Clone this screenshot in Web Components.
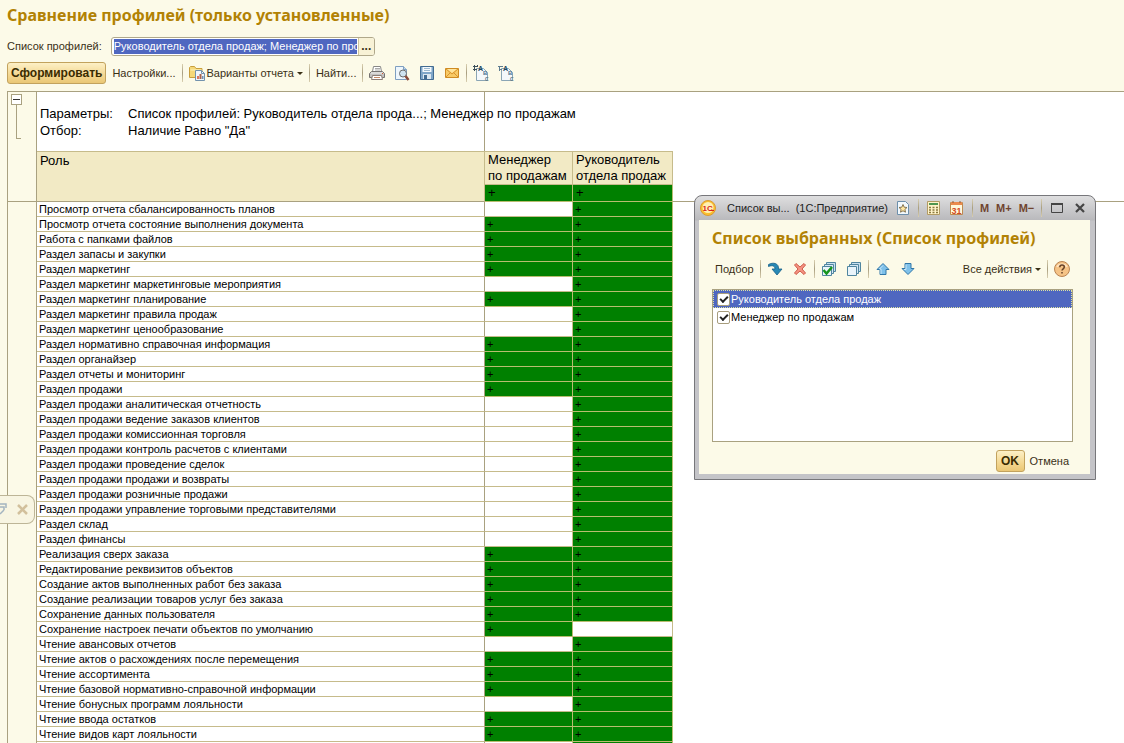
<!DOCTYPE html>
<html lang="ru">
<head>
<meta charset="utf-8">
<title>Сравнение профилей</title>
<style>
html, body { height: 100%; }
body {
  margin: 0; overflow: hidden; color: #3a3016; background: #fcfae8;
  font: 11px/14px "Liberation Sans", Arial, sans-serif;
  --frame: #a9a180; --grid: #c6bb8b; --gold: #b28204; --select: #4f67c0;
}
</style>
</head>
<body>
<profile-report></profile-report>
<script>
const define = (name, html, setup) => {
  const tpl = document.createElement('template');
  tpl.innerHTML = html;
  customElements.define(name, class extends HTMLElement {
    constructor() {
      super();
      this.attachShadow({ mode: 'open' }).append(tpl.content.cloneNode(true));
    }
    connectedCallback() { if (setup) setup(this, this.shadowRoot); }
  });
};

const sheetsBehind = '<path d="M5.500 1.500h9v9h-9z" fill="#c9e0ef" stroke="#50859f"/><path d="M3.500 3.500h9v9h-9z" fill="#d6e8f4" stroke="#50859f"/><path d="M1.500 5.500h9v9h-9z" fill="#eaf4fa" stroke="#50859f"/>';
const letters = '<path d="M3.500 3.500h7l4 4v8h-11z" fill="#f4f8fb" stroke="#8aa5b5"/><g font-family="Liberation Sans" font-weight="700" fill="#1f465f"><text x="5" y="6" font-size="7">A</text><text x="10" y="10" font-size="6" fill="#4e7590">B</text><text x="12" y="16" font-size="5" fill="#5e7584">C</text></g>';
const icons = {
  folder: '<path d="M.500 12.500v-10l1-1h4l1.500 2h6v9z" fill="#f5d878" stroke="#c89e3c"/><path d="M1.500 5h11" stroke="#fff2b8"/><path d="M6.500 5.500h6l3 3v7h-9z" fill="#f0f6fb" stroke="#7292ad"/><path d="M12.500 5.500v3h3" fill="none" stroke="#7292ad"/><path d="M8 11h2v3H8z" fill="#db7660"/><path d="M10.500 9h2v5h-2z" fill="#a8654f"/><path d="M13 11h1.500v3H13z" fill="#6f91b6"/>',
  print: '<path d="M4.500 1.500h7l1 5h-9z" fill="#fff" stroke="#888"/><path d="M6 3.500h5M6 5h5" stroke="#aaa"/><path d="M2.500 6.500h11l2 2v4h-2l-1 1h-9l-1-1h-2v-4z" fill="#c3c1c0" stroke="#757271"/><path d="M2 8h12" stroke="#f2f2f2"/><path d="M3.500 10.500h9l1 4h-11z" fill="#fff" stroke="#8b7d77"/><path d="M5 12.500h6" stroke="#c98a68"/><path d="M13 8.500h1" stroke="#d65d2e"/>',
  preview: '<path d="M1.500 1.500h8l3 3v10h-11z" fill="#eef6fc" stroke="#7f9fc0"/><path d="M9.500 1.500v3h3" fill="#bed6ea" stroke="#7f9fc0"/><circle cx="9" cy="8.500" r="3.500" fill="#cfe3f0" stroke="#6b6b6b"/><path d="M11.500 11l3 4" stroke="#8a4a38" stroke-width="2.500"/>',
  save: '<path d="M1.500 1.500h13v13h-13z" fill="#7fa6c8" stroke="#426b91"/><path d="M3.500 2h9v5h-9z" fill="#f5f9fc"/><path d="M5 3.500h6M5 5.500h6" stroke="#9ebad0"/><path d="M4 9h8v5H4z" fill="#dce7ef"/><path d="M5 10h3v4H5z" fill="#426b91"/>',
  mail: '<path d="M1.500 3.500h13v9h-13z" fill="#f8ca65" stroke="#cf8b22"/><path d="M3 4h10L8 8z" fill="#ffe59c"/><path d="M2 4l6 5 6-5M2 12l4.500-4.500M14 12L9.500 7.500" fill="none" stroke="#d9952f"/>',
  groupA: letters + '<path d="M0 1.500h5M0 4.500h4M1.500 0v6M4.500 0v2" stroke="#3c4f5a" fill="none"/>',
  groupB: letters + '<path d="M0 1.500h5M1.500 1v5M1 4.500h3" stroke="#5d7c90" fill="none"/>',
  logo: '<circle cx="8" cy="8" r="7.500" fill="#fbc02e" stroke="#d99a35"/><circle cx="8" cy="7.500" r="5.500" fill="#fff0b4"/><text x="2.500" y="11" font-family="Liberation Sans" font-size="8" font-weight="700" fill="#d8261b">1С</text><path d="M9 10.500h5" stroke="#d8261b"/>',
  star: '<path d="M2.500 1.500h8l3 3v10h-11z" fill="#f2f8fc" stroke="#6c8fab"/><path d="M8 4.500l1.200 2.700 2.800.3-2.100 1.900.6 2.800L8 10.800l-2.500 1.400.6-2.800L4 7.500l2.800-.3z" fill="#ffe7a2" stroke="#7b6943" stroke-width=".900"/>',
  calc: '<path d="M1.500 1.500h12v13h-12z" fill="#fff3c8" stroke="#b29b63"/><path d="M3 3h9v2H3z" fill="#4f9650"/><path d="M3 7.500h9M3 10h9M3 12.500h9" stroke="#8a7a40" stroke-width="1.500" stroke-dasharray="2 1.500"/>',
  date: '<path d="M1.500 2.500h12v12h-12z" fill="#fff8dc" stroke="#bd8a50"/><path d="M2 2h11v3H2z" fill="#eb8a4d"/><path d="M4 1v2M11 1v2" stroke="#8d5c36"/><text x="2.500" y="13.500" font-family="Liberation Sans" font-size="9" font-weight="700" fill="#d34b22">31</text>',
  pick: '<path d="M1.500 3.500C6 1 12 2 11.500 8H15l-5 6-5-6h3C8 5 5.500 3.800 1.500 5.500z" fill="#2889b5" stroke="#176088" stroke-width=".800"/>',
  remove: '<path d="M2.500 4l1.500-1.500L8 6l4-3.500L13.500 4 10 8l3.500 4-1.500 1.500L8 10l-4 3.500L2.500 12 6 8z" fill="#f59483" stroke="#cf5a48"/>',
  checkAll: sheetsBehind + '<path d="M2.500 9l3 3.500L11 6" fill="none" stroke="#17951c" stroke-width="2.500"/>',
  uncheckAll: sheetsBehind,
  up: '<path d="M8 2.500l6 6h-3v5H5v-5H2z" fill="#7fc1ea" stroke="#3177a8"/><path d="M8 4.500L4.500 8H6v5" fill="none" stroke="#c9e8fa"/>',
  down: '<path d="M8 13.500l6-6h-3v-5H5v5H2z" fill="#7fc1ea" stroke="#3177a8"/><path d="M6 3.500v5H4" fill="none" stroke="#c9e8fa"/>',
  help: '<circle cx="8" cy="8" r="7.500" fill="#f5c386" stroke="#b98352"/><path d="M3 6a5.500 4.500 0 0 1 10 0" fill="none" stroke="#ffe5c4" stroke-width="1.500"/><path d="M5.800 6.200c0-3 4.500-2.800 4.500-.2C10.300 7.800 8 7.800 8 9.600M8 11v1.600" fill="none" stroke="#664126" stroke-width="1.500"/>',
  max: '<path d="M2.500 4h11v8.500h-11z" fill="none" stroke="#444"/><path d="M2 4h12" stroke="#444" stroke-width="2"/>',
  close: '<path d="M4 4l8 8M12 4l-8 8" stroke="#454545" stroke-width="2.200"/>',
  cross: '<path d="M3 3l9 9M12 3l-9 9" stroke="#d2c09c" stroke-width="2.500"/>',
  pin: '<path d="M0 2h6v4M0 5h4v3M4 8l-4 4" fill="none" stroke="#a3b4c0" stroke-width="1.500"/>'
};

define('ui-icon', `<style>:host{display:block;flex:none;width:16px;height:16px}svg{display:block}</style><svg width="16" height="16" viewBox="0 0 16 16" aria-hidden="true"></svg>`,
  (el, root) => { root.querySelector('svg').innerHTML = icons[el.getAttribute('name')]; });

define('tool-separator', `<style>:host{display:block;flex:none;width:1px;height:18px;background:linear-gradient(#d9cfb0,#a89e80,#d9cfb0)}</style>`);

define('tool-button', `<style>
:host{display:block;flex:none}
button{display:flex;align-items:center;gap:2px;margin:0;padding:0;border:0;background:none;color:inherit;font:inherit;white-space:nowrap}
:host([primary]) button{box-sizing:border-box;justify-content:center;min-width:29px;height:22px;padding:0 3px;border:1px solid #c2a25d;border-radius:3px;background:linear-gradient(#fdf0c6,#f3d791 60%,#eac775);font-size:12px;font-weight:700;color:#3a2b00}
:host([menu]) button::after{content:"";margin-left:1px;border:3px solid transparent;border-top-color:#3a3016;border-bottom:0}
:host([memory]) button{font-weight:700;color:#70442f}
</style><button type="button"><slot></slot></button>`, (el, root) => {
  if (el.title) root.querySelector('button').setAttribute('aria-label', el.title);
});

define('profile-field', `<style>
:host{display:flex;align-items:center;height:20px;gap:9px}
.box{box-sizing:border-box;display:flex;width:264px;height:19px;border:1px solid #b0a88a;border-radius:3px;background:#fff;overflow:hidden}
input{flex:1;min-width:0;margin:1px 0 1px 2px;padding:0;border:0;background:var(--select);color:#fff;font:inherit;outline:0}
button{width:16px;margin-left:1px;padding:0;border:0;border-left:1px solid #cfc49c;background:#f8f2d6;color:#3a3016;font:700 12px/12px "Liberation Sans",sans-serif}
</style><label for="f">Список профилей:</label><div class="box"><input id="f" value="Руководитель отдела продаж; Менеджер по продажам"><button type="button" aria-label="Выбрать">...</button></div>`);

define('report-toolbar', `<style>
:host{display:flex;align-items:center;gap:6px;height:24px}
.icons{display:flex;gap:9px}
</style>
<tool-button primary>Сформировать</tool-button><tool-button>Настройки...</tool-button><tool-separator></tool-separator>
<tool-button menu><ui-icon name="folder"></ui-icon>Варианты отчета</tool-button><tool-separator></tool-separator>
<tool-button>Найти...</tool-button><tool-separator></tool-separator>
<div class="icons"><tool-button title="Печать"><ui-icon name="print"></ui-icon></tool-button><tool-button title="Просмотр"><ui-icon name="preview"></ui-icon></tool-button><tool-button title="Сохранить"><ui-icon name="save"></ui-icon></tool-button><tool-button title="Отправить"><ui-icon name="mail"></ui-icon></tool-button></div>
<tool-separator></tool-separator>
<div class="icons"><tool-button title="Развернуть группы"><ui-icon name="groupA"></ui-icon></tool-button><tool-button title="Свернуть группы"><ui-icon name="groupB"></ui-icon></tool-button></div>`);

const rows = `Просмотр отчета сбалансированность планов|01
Просмотр отчета состояние выполнения документа|11
Работа с папками файлов|11
Раздел запасы и закупки|11
Раздел маркетинг|11
Раздел маркетинг маркетинговые мероприятия|01
Раздел маркетинг планирование|11
Раздел маркетинг правила продаж|01
Раздел маркетинг ценообразование|01
Раздел нормативно справочная информация|11
Раздел органайзер|11
Раздел отчеты и мониторинг|11
Раздел продажи|11
Раздел продажи аналитическая отчетность|01
Раздел продажи ведение заказов клиентов|01
Раздел продажи комиссионная торговля|01
Раздел продажи контроль расчетов с клиентами|01
Раздел продажи проведение сделок|01
Раздел продажи продажи и возвраты|01
Раздел продажи розничные продажи|01
Раздел продажи управление торговыми представителями|01
Раздел склад|01
Раздел финансы|01
Реализация сверх заказа|11
Редактирование реквизитов объектов|11
Создание актов выполненных работ без заказа|11
Создание реализации товаров услуг без заказа|11
Сохранение данных пользователя|11
Сохранение настроек печати объектов по умолчанию|10
Чтение авансовых отчетов|01
Чтение актов о расхождениях после перемещения|11
Чтение ассортимента|11
Чтение базовой нормативно-справочной информации|11
Чтение бонусных программ лояльности|01
Чтение ввода остатков|11
Чтение видов карт лояльности|11
|01`.split('\n').map(r => r.split('|'));

define('role-table', `<style>
:host{display:block;color:#000}
table{width:100%;table-layout:fixed;border-collapse:separate;border-spacing:0}
.role{width:448px}.manager{width:88px}.head{width:100px}
th,td{box-sizing:border-box;padding:0;text-align:left;vertical-align:top;font-weight:400;white-space:nowrap}
th{font-size:13px;line-height:16px;padding-left:3px;background:#f2eac5;border-right:1px solid var(--grid);border-bottom:1px solid var(--grid)}
.top th{height:34px;border-top:1px solid var(--grid)}
.top [rowspan]{padding-top:1px}
.sum th{height:17px}
th[rowspan],th.has{border-bottom-color:var(--frame)}
.top .rest{background:none;border-top:0;border-right:0}
tbody th,tbody td{height:15px;font-size:11px;line-height:14px;padding-left:2px;border-right:1px solid var(--grid);border-bottom:1px solid var(--grid)}
tbody th{background:#fff;border-right-color:var(--frame)}
tbody .rest{border:0}
tbody .has,thead .has{background:#008000;border-right-color:#b9bd70;border-bottom-color:#b9bd70}
</style>
<table><colgroup><col class="role"><col class="manager"><col class="head"><col></colgroup>
<thead><tr class="top"><th rowspan="2">Роль</th><th>Менеджер<br>по продажам</th><th>Руководитель<br>отдела продаж</th><th rowspan="2" class="rest"></th></tr>
<tr class="sum"><th class="has">+</th><th class="has">+</th></tr></thead><tbody></tbody></table>`, (el, root) => {
  const cell = v => v === '1' ? '<td class="has">+</td>' : '<td></td>';
  root.querySelector('tbody').innerHTML = rows.map(([n, f]) =>
    `<tr><th scope="row">${n}</th>${cell(f[0])}${cell(f[1])}<td class="rest"></td></tr>`).join('');
});

define('report-sheet', `<style>
:host{display:flex;background:#fff;border:solid var(--frame);border-width:1px 0 0 1px;overflow:hidden}
.gutter{flex:none;box-sizing:border-box;width:29px;background:#fcfae8;border-right:1px solid var(--frame)}
.fold{box-sizing:border-box;height:110px;padding:2px 3px;border-bottom:1px solid var(--frame)}
.fold button{display:flex;align-items:center;justify-content:center;box-sizing:border-box;width:11px;height:11px;padding:0;border:1px solid var(--frame);background:#fff}
.fold button::before{content:"";width:7px;height:1px;background:#333}
.bracket{box-sizing:border-box;width:5px;height:34px;margin-left:5px;border:solid var(--frame);border-width:0 0 1px 1px}
.main{flex:1;min-width:0}
dl{box-sizing:border-box;display:grid;grid-template-columns:88px auto;align-content:start;width:448px;height:59px;margin:0;padding:13px 0 0 3px;border-right:1px solid var(--frame);color:#000;font-size:13px;line-height:17px;white-space:nowrap}
dd{margin:0;width:0}
</style>
<div class="gutter"><div class="fold"><button type="button" aria-label="Свернуть"></button><div class="bracket"></div></div></div>
<div class="main"><dl><dt>Параметры:</dt><dd>Список профилей: Руководитель отдела прода...; Менеджер по продажам</dd><dt>Отбор:</dt><dd>Наличие Равно "Да"</dd></dl><role-table></role-table></div>`);

define('check-item', `<style>
:host{display:block}
label{display:flex;align-items:center;gap:1px;box-sizing:border-box;height:18px;padding-left:3px;border:1px solid transparent;color:#000}
:host([selected]) label{background:var(--select);color:#fff;border:1px dotted #dfe3a0}
input{appearance:none;display:grid;place-items:center;flex:none;box-sizing:border-box;width:13px;height:13px;margin:0;border:1px solid #a79d7d;border-radius:2px;background:#fff}
input:checked::before{content:"";box-sizing:border-box;width:8px;height:5px;margin-bottom:2px;border:solid #222;border-width:0 0 2px 2px;transform:rotate(-45deg)}
</style><label><input type="checkbox" checked><slot></slot></label>`);

define('selection-dialog', `<style>
:host{display:block;box-sizing:border-box;border:1px solid #77777b;border-radius:8px 8px 0 0;background:linear-gradient(#dededf,#b9b9bc 24px,#c4c4c8 25px);padding:0 5px 5px 4px}
header{display:flex;align-items:center;height:24px;gap:7px;padding:0 2px 0 1px;color:#222}
header .name{flex:1;margin-left:4px;white-space:pre}
.body{background:#fcfae8;padding:8px 17px 2px 13px}
h2{margin:0;font:700 16px/20px "Noto Sans",sans-serif;color:var(--gold);white-space:nowrap}
.tools{display:flex;align-items:center;gap:6px;height:24px;margin:9px 0 8px;padding:0 3px}
.pair{display:flex;gap:9px}
.all{margin-left:auto}
.list{box-sizing:border-box;height:153px;border:1px solid #a9a180;background:#fff}
footer{display:flex;align-items:center;justify-content:flex-end;gap:5px;height:22px;padding:8px 4px 0 0}
</style>
<header><ui-icon name="logo"></ui-icon><span class="name">Список вы...  (1С:Предприятие)</span>
<tool-button title="Избранное"><ui-icon name="star"></ui-icon></tool-button><tool-separator></tool-separator>
<tool-button title="Калькулятор"><ui-icon name="calc"></ui-icon></tool-button><tool-button title="Календарь"><ui-icon name="date"></ui-icon></tool-button><tool-separator></tool-separator>
<tool-button memory>M</tool-button><tool-button memory>M+</tool-button><tool-button memory>M−</tool-button><tool-separator></tool-separator>
<tool-button title="Развернуть"><ui-icon name="max"></ui-icon></tool-button><tool-button title="Закрыть"><ui-icon name="close"></ui-icon></tool-button></header>
<div class="body"><h2>Список выбранных (Список профилей)</h2>
<div class="tools"><tool-button>Подбор</tool-button><tool-separator></tool-separator>
<div class="pair"><tool-button title="Добавить"><ui-icon name="pick"></ui-icon></tool-button><tool-button title="Удалить"><ui-icon name="remove"></ui-icon></tool-button></div><tool-separator></tool-separator>
<div class="pair"><tool-button title="Отметить все"><ui-icon name="checkAll"></ui-icon></tool-button><tool-button title="Снять отметки"><ui-icon name="uncheckAll"></ui-icon></tool-button></div><tool-separator></tool-separator>
<div class="pair"><tool-button title="Вверх"><ui-icon name="up"></ui-icon></tool-button><tool-button title="Вниз"><ui-icon name="down"></ui-icon></tool-button></div>
<tool-button class="all" menu>Все действия</tool-button><tool-separator></tool-separator><tool-button title="Справка"><ui-icon name="help"></ui-icon></tool-button></div>
<div class="list"><check-item selected>Руководитель отдела продаж</check-item><check-item>Менеджер по продажам</check-item></div>
<footer><tool-button primary>OK</tool-button><tool-button>Отмена</tool-button></footer></div>`);

define('docked-tab', `<style>
:host{display:flex;align-items:center;justify-content:space-between;box-sizing:border-box;width:35px;height:29px;padding:0 5px 0 0;border:1px solid #bdb597;border-left:0;border-radius:0 8px 8px 0;background:#f8f5e2}
ui-icon{margin-right:-2px}
</style><ui-icon name="pin"></ui-icon><tool-button title="Закрыть панель"><ui-icon name="cross"></ui-icon></tool-button>`);

define('profile-report', `<style>
:host{display:flex;flex-direction:column;height:100vh;position:relative;overflow:hidden}
h1{margin:5px 7px 11px;font:700 16px/20px "Noto Sans",sans-serif;color:var(--gold);white-space:nowrap}
profile-field,report-toolbar{margin-left:7px}
report-toolbar{margin-top:5px}
report-sheet{flex:1;min-height:0;margin:6px 0 0 7px}
selection-dialog{position:absolute;left:694px;top:195px;width:402px}
docked-tab{position:absolute;left:0;top:495px}
</style>
<h1>Сравнение профилей (только установленные)</h1>
<profile-field></profile-field><report-toolbar></report-toolbar><report-sheet></report-sheet>
<selection-dialog role="dialog" aria-label="Список выбранных"></selection-dialog><docked-tab></docked-tab>`);
</script>
</body>
</html>
